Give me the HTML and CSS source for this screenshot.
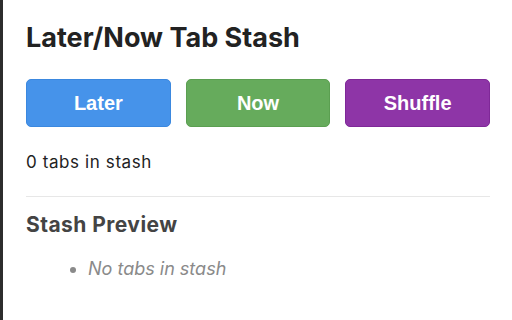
FILE: index.html
```html
<!DOCTYPE html>
<html lang="en">
<head>
<meta charset="utf-8">
<title>Later/Now Tab Stash</title>
<link rel="stylesheet" href="styles.css">
</head>
<body>
<div class="popup">
  <h1 class="title">Later/Now Tab Stash</h1>
  <div class="actions">
    <button class="btn btn-later">Later</button>
    <button class="btn btn-now">Now</button>
    <button class="btn btn-shuffle">Shuffle</button>
  </div>
  <p class="count">0 tabs in stash</p>
  <hr class="divider">
  <h2 class="preview-title">Stash Preview</h2>
  <ul class="stash-list">
    <li class="empty">No tabs in stash</li>
  </ul>
</div>
</body>
</html>
```

FILE: styles.css
```css
html, body {
  margin: 0;
  padding: 0;
  background: #ffffff;
}

body {
  font-family: Inter, "Liberation Sans", Arial, sans-serif;
  color: #222222;
}

.popup {
  box-sizing: border-box;
  height: 320px;
  overflow: hidden;
  border-left: 3px solid #2d2d2d;
  padding: 21px 22px 0 23px;
}

.title {
  margin: 0;
  font-size: 27px;
  line-height: 34px;
  font-weight: 700;
  color: #222222;
}

.actions {
  display: grid;
  grid-template-columns: repeat(3, 1fr);
  gap: 15px;
  margin-top: 24px;
}

.btn {
  height: 48px;
  border-radius: 5px;
  border: 1px solid transparent;
  color: #ffffff;
  font-family: "Liberation Sans", Arial, sans-serif;
  font-weight: 700;
  font-size: 20px;
  padding: 0;
  cursor: pointer;
}

.btn-later {
  background: #4693ea;
  border-color: #3b88df;
}

.btn-now {
  background: #66ab5c;
  border-color: #5b9f51;
}

.btn-shuffle {
  background: #8e35a7;
  border-color: #7f2898;
}

.count {
  margin: 25px 0 0;
  font-size: 17px;
  line-height: 20px;
  letter-spacing: 0.6px;
}

.divider {
  margin: 24px 0 0;
  border: 0;
  border-top: 1px solid #e7e7e7;
  height: 0;
}

.preview-title {
  margin: 15px 0 0;
  font-size: 21px;
  line-height: 26px;
  font-weight: 700;
  letter-spacing: 0.45px;
  color: #444444;
}

.stash-list {
  margin: 20px 0 0;
  padding-left: 62px;
  color: #8a8a8a;
}

.empty {
  font-style: italic;
  font-size: 18px;
  line-height: 22px;
}
```
